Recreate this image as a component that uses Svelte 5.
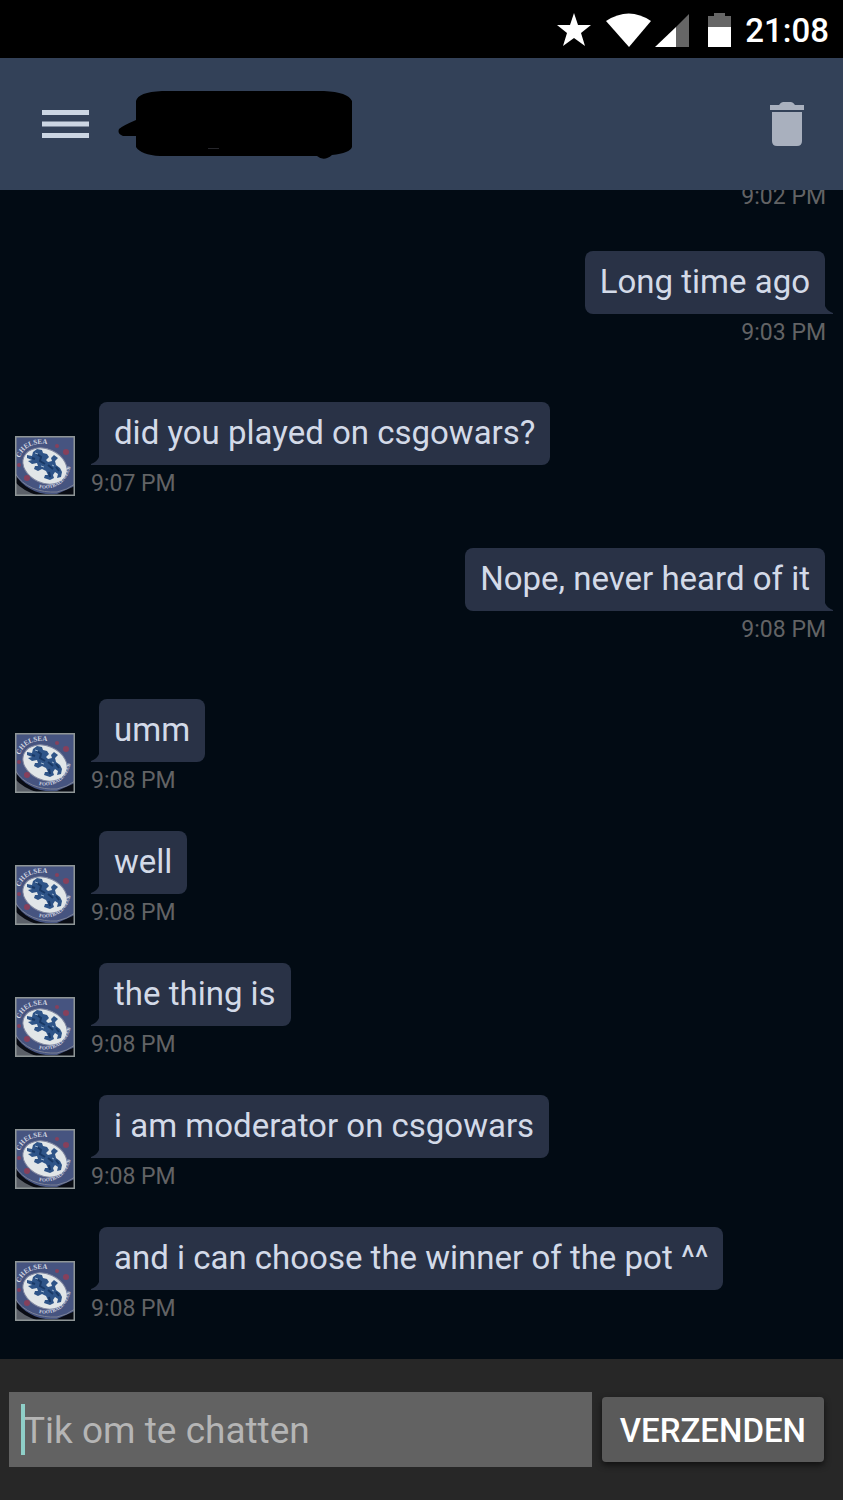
<script>
  const messages = [
    { time: '9:02 PM', mine: true },
    { text: 'Long time ago', time: '9:03 PM', mine: true },
    { text: 'did you played on csgowars?', time: '9:07 PM' },
    { text: 'Nope, never heard of it', time: '9:08 PM', mine: true },
    { text: 'umm', time: '9:08 PM' },
    { text: 'well', time: '9:08 PM' },
    { text: 'the thing is', time: '9:08 PM' },
    { text: 'i am moderator on csgowars', time: '9:08 PM' },
    { text: 'and i can choose the winner of the pot ^^', time: '9:08 PM' }
  ];
  let draft = $state('');
</script>

{#snippet avatar(id)}
  <svg class="avatar" viewBox="0 0 60 60" aria-hidden="true">
    <defs>
      <path id="top{id}" d="M5 22C8 12 18 5 38 9" />
      <path id="low{id}" d="M24 52C42 55 56 45 57 20" />
    </defs>
    <rect width="60" height="60" fill="#465480" />
    <path d="M0 38C8 52 24 60 42 58L60 50V60H0Z" fill="#090c14" />
    <path d="M0 46Q8 55 24 60H0Z" fill="#5b6068" />
    <path d="M0 37C8 51 25 57 42 56Q52 54 60 48" fill="none" stroke="#7c8296" stroke-width="1" />
    <ellipse cx="30" cy="30" rx="23" ry="17" transform="rotate(24 30 30)" fill="#e1e6e8" stroke="#8087a0" />
    <path d="M12 19L17 20 18 16 22 13 27 14 28 17 32 18 34 21 31 24 33 26 37 25 36 22 39 19 43 22 40 25 41 29 45 32 47 36 46 41 42 42 43 38 40 36 38 39 39 42 35 44 29 42 30 39 33 39 31 35 27 33 23 35 19 33 20 30 23 30 22 27 17 28 13 25 17 24 12 22Z" fill="#2e5488" />
    <path d="M22 18l4 3-1 4 5 3M33 29l5 4M17 22l3 1M34 36l1 5M41 31l3 4" fill="none" stroke="#193966" stroke-width="2" />
    <path d="M20 17l3 1M26 30l3 1M37 29l2 1" stroke="#9eb6d0" stroke-width="1" />
    <g fill="#86405c">
      <circle cx="42" cy="10" r="2" /><circle cx="51" cy="16" r="3" />
      <circle cx="4" cy="29" r="2" /><circle cx="12" cy="42" r="3" />
    </g>
    <g class="crest">
      <text class="club"><textPath href="#top{id}">CHELSEA</textPath></text>
      <text><textPath href="#low{id}">FOOTBALL CLUB</textPath></text>
    </g>
    <rect x="0.5" y="0.5" width="59" height="59" fill="none" stroke="#8f9697" stroke-width="2" />
  </svg>
{/snippet}

<div class="app">
  <div class="status">
    <svg width="134" height="36" viewBox="0 0 134 36" aria-hidden="true">
      <path d="M18 0l4 12h13l-10 8 4 13-11-8-11 8 4-13-10-8h13z" fill="#fff" />
      <path d="M50 8Q73-7 95 8L73 34Z" fill="#fff" />
      <path d="M99 34L120 14V34Z" fill="#fff" />
      <path d="M120 14L133 1V34H120Z" fill="#666" />
    </svg>
    <svg width="24" height="36" viewBox="0 0 24 36" aria-hidden="true">
      <path d="M0 3H6V0H17V3H23V15H0Z" fill="#666" />
      <path d="M0 14H23V34H0Z" fill="#fff" />
    </svg>
    <time>21:08</time>
  </div>

  <header>
    <button class="icon" aria-label="Menu">
      <svg width="48" height="30" viewBox="0 0 48 30"><path d="M0 3.500H47M0 15H47M0 26.500H47" stroke="#cbd5e2" stroke-width="5" /></svg>
    </button>
    <svg class="name" width="236" height="70" viewBox="0 0 236 70" aria-hidden="true">
      <path d="M18 12Q20 3 44 2H206Q230 3 234 12V58Q232 64 214 66Q206 73 199 67H42Q23 66 18 58V47H5Q-1 45 1 40Q4 37 18 31Z" fill="#000" />
      <path d="M90 59.500H101" stroke="#26262b" />
    </svg>
    <button class="icon trash" aria-label="Delete">
      <svg width="34" height="46" viewBox="0 0 34 46">
        <path d="M0 4H9Q11 1 13 1H21Q23 1 25 4H34V9H0Z" fill="#a9b0be" />
        <path d="M2 11H32V40Q32 45 27 45H7Q2 45 2 40Z" fill="#a9b0be" />
      </svg>
    </button>
  </header>

  <main>
    {#each messages as m, i}
      <div class="message" class:mine={m.mine}>
        {#if !m.mine}{@render avatar(i)}{/if}
        <div class="body">
          {#if m.text}
            <div class="bubble">
              {m.text}
              <svg class="tail" width="8" height="8" viewBox="0 0 8 8" aria-hidden="true"><path d="M8 0Q6 5 0 7V8H8Z" fill="#293246" /></svg>
            </div>
          {/if}
          <time>{m.time}</time>
        </div>
      </div>
    {/each}
  </main>

  <form onsubmit={(e) => e.preventDefault()}>
    <div class="field">
      <input aria-label="Tik om te chatten" placeholder="Tik om te chatten" bind:value={draft} />
      {#if !draft}<span class="caret"></span>{/if}
    </div>
    <button class="send">VERZENDEN</button>
  </form>
</div>

<style>
  :global(body) { margin: 0; background: #020b14; }
  .app, input, button { font-family: Roboto, "Liberation Sans", sans-serif; }
  .app { display: flex; flex-direction: column; height: 100vh; background: #020b14; }
  svg { display: block; flex: none; }
  .status {
    display: flex; flex: none; align-items: center; justify-content: flex-end;
    box-sizing: border-box; height: 58px; padding: 3px 14px 0 0; background: #000;
  }
  .status svg + svg { margin-left: 18px; }
  .status time { margin-left: 13px; color: #fff; font-size: 33px; font-weight: 500; }
  header {
    display: flex; flex: none; align-items: center; box-sizing: border-box;
    height: 132px; padding: 0 39px 0 42px; background: #334158;
  }
  button { border: 0; cursor: pointer; }
  .icon { padding: 0; background: none; }
  .name { margin-left: 28px; }
  .trash { margin-left: auto; }
  main {
    display: flex; flex: 1; flex-direction: column; justify-content: flex-end;
    min-height: 0; overflow: hidden; padding: 0 17px 31px 15px;
  }
  .message { display: flex; flex: none; align-items: flex-end; margin-top: 31px; }
  .message.mine { justify-content: flex-end; margin-top: 45px; }
  .mine + .message { margin-top: 50px; }
  .mine + .message.mine { margin-top: 35px; }
  .avatar { width: 60px; height: 60px; margin: 0 16px 7px 0; }
  .crest { fill: #d3d7e2; font-family: "Liberation Serif", serif; font-size: 5px; font-weight: 700; }
  .club { font-size: 7px; }
  .body { display: flex; flex-direction: column; align-items: flex-start; }
  .mine .body { align-items: flex-end; }
  .bubble {
    position: relative; margin-left: 8px; padding: 11px 15px 12px; border-radius: 8px 8px 8px 0;
    background: #293246; color: #d3dae8; font-size: 33px; line-height: 40px;
  }
  .mine .bubble { margin: 0 1px 0 0; border-radius: 8px 8px 0 8px; }
  .tail { position: absolute; right: 100%; bottom: 0; }
  .mine .tail { right: auto; left: 100%; transform: scaleX(-1); }
  .body time { color: #626365; font-size: 23px; line-height: 38px; }
  form {
    display: flex; flex: none; align-items: center; gap: 10px; box-sizing: border-box;
    height: 141px; padding: 0 19px 0 9px; background: #272727;
  }
  .field { position: relative; flex: 1; min-width: 0; }
  input {
    display: block; box-sizing: border-box; width: 100%; height: 75px; padding: 2px 12px 0 14px;
    border: 0; outline: 0; background: #626262; color: #fff; font-size: 37px;
  }
  input::placeholder { color: #b5b5b5; opacity: 1; }
  .caret { position: absolute; top: 12px; left: 12px; width: 4px; height: 51px; background: #8fcfc8; }
  .send {
    height: 65px; padding: 2px 18px 0; border-radius: 4px; background: #5a5a5a; color: #fff;
    font-size: 33px; font-weight: 500; box-shadow: 0 3px 6px #111;
  }
</style>
